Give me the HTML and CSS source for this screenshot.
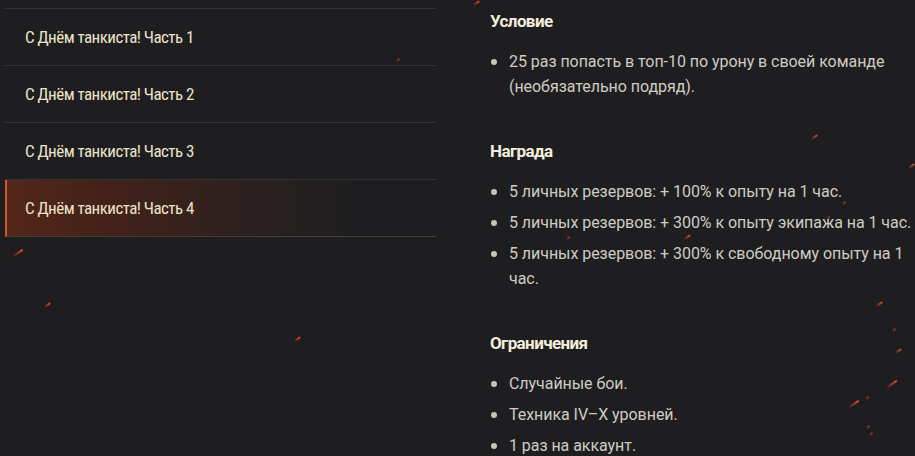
FILE: index.html
```html
<!doctype html>
<html lang="ru">

<head>
	<meta charset="utf-8">
	<title>С Днём танкиста!</title>
	<link rel="stylesheet" href="styles.css">
</head>

<body>
	<div class="page">
		<nav class="missions">
			<a class="mission" href="#">С Днём танкиста! Часть 1</a>
			<a class="mission" href="#">С Днём танкиста! Часть 2</a>
			<a class="mission" href="#">С Днём танкиста! Часть 3</a>
			<a class="mission active" href="#">С Днём танкиста! Часть 4</a>
		</nav>
		<article class="details">
			<h3>Условие</h3>
			<ul>
				<li>25 раз попасть в топ-10 по урону в своей команде (необязательно подряд).</li>
			</ul>
			<h3>Награда</h3>
			<ul>
				<li>5 личных резервов: + 100% к опыту на 1 час.</li>
				<li>5 личных резервов: + 300% к опыту экипажа на 1 час.</li>
				<li>5 личных резервов: + 300% к свободному опыту на 1 час.</li>
			</ul>
			<h3>Ограничения</h3>
			<ul>
				<li>Случайные бои.</li>
				<li>Техника IV–X уровней.</li>
				<li>1 раз на аккаунт.</li>
			</ul>
		</article>
	</div>
	<!-- sparks -->
	<div class="sparks">
		<i class="spark big" style="left:12px;top:252px"></i>
		<i class="spark" style="left:44px;top:304px"></i>
		<i class="spark" style="left:294px;top:338px"></i>
		<i class="spark" style="left:473px;top:2px"></i>
		<i class="spark tiny" style="left:396px;top:59px"></i>
		<i class="spark" style="left:811px;top:136px"></i>
		<i class="spark" style="left:908px;top:165px"></i>
		<i class="spark tiny" style="left:842px;top:202px"></i>
		<i class="spark" style="left:684px;top:236px"></i>
		<i class="spark tiny" style="left:566px;top:237px"></i>
		<i class="spark tiny" style="left:826px;top:217px"></i>
		<i class="spark" style="left:876px;top:303px"></i>
		<i class="spark tiny" style="left:892px;top:329px"></i>
		<i class="spark" style="left:895px;top:350px"></i>
		<i class="spark big" style="left:886px;top:383px"></i>
		<i class="spark big" style="left:848px;top:403px"></i>
		<i class="spark tiny" style="left:865px;top:397px"></i>
		<i class="spark tiny" style="left:866px;top:426px"></i>
		<i class="spark tiny" style="left:869px;top:433px"></i>
	</div>
</body>

</html>
```

FILE: styles.css
```css
html,
body
{
	margin: 0;
	padding: 0;
}

body
{
	background: #1e1e20;
	font-family: "Roboto", "Liberation Sans", sans-serif;
	height: 456px;
	overflow: hidden;
	position: relative;
}

.page
{
	display: flex;
	align-items: flex-start;
}

.missions
{
	display: flex;
	flex-direction: column;
	flex: none;
	width: 431px;
	margin: 8px 0 0 5px;
	border-top: 1px solid #343436;
}

.mission
{
	display: block;
	height: 56px;
	line-height: 56px;
	padding-left: 20px;
	border-bottom: 1px solid #343436;
	color: #ece3c8;
	font-family: "Roboto Condensed", "Roboto", sans-serif;
	font-size: 17px;
	letter-spacing: -0.55px;
	text-decoration: none;
}

.mission.active
{
	padding-left: 18px;
	border-left: 2px solid #d2562c;
	background: linear-gradient(90deg, #532619 0%, #42211a 25%, #2c211f 55%, rgba(30, 30, 32, 0) 80%);
	border-bottom-color: #4a3c38;
}

.details
{
	flex: none;
	width: 428px;
	margin: 9px 0 0 54px;
	color: #cfccc3;
}

.details h3
{
	margin: 0;
	font-size: 17px;
	line-height: 24px;
	font-weight: 700;
	color: #f3eedc;
	letter-spacing: -0.6px;
}

.details ul
{
	list-style: none;
	margin: 16px 0 40px;
	padding: 0;
	display: flex;
	flex-direction: column;
	gap: 6px;
}

.details li
{
	position: relative;
	padding-left: 19px;
	font-size: 16px;
	line-height: 25px;
	letter-spacing: -0.05px;
}

.details li::before
{
	content: "";
	position: absolute;
	left: 1px;
	top: 10px;
	width: 6px;
	height: 6px;
	border-radius: 50%;
	background: #c6c2b6;
}

.sparks
{
	position: absolute;
	inset: 0;
	pointer-events: none;
}

.spark
{
	position: absolute;
	width: 7px;
	height: 2px;
	border-radius: 1px;
	background: linear-gradient(90deg, rgba(200, 50, 30, 0.2), #e0502c);
	transform: rotate(-35deg);
}

.spark.big
{
	width: 12px;
}

.spark.tiny
{
	width: 4px;
	opacity: 0.7;
}
```
